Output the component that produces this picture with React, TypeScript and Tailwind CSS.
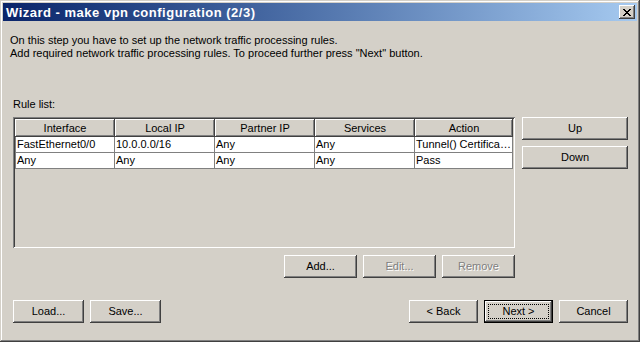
import React from "react";

const raised =
  "shadow-[inset_-1px_-1px_#404040,inset_1px_1px_#ffffff,inset_-2px_-2px_#808080,inset_2px_2px_#d4d0c8]";

type BtnProps = {
  label: string;
  className?: string;
  disabled?: boolean;
  isDefault?: boolean;
};

function Button({ label, className = "", disabled, isDefault }: BtnProps) {
  if (isDefault) {
    return (
      <div className={`h-[23px] border border-black bg-[#d4d0c8] ${className}`}>
        <div className={`flex h-full w-full items-center justify-center p-[3px] ${raised}`}>
          <div className="flex h-full w-full items-center justify-center border border-dotted border-black">
            {label}
          </div>
        </div>
      </div>
    );
  }
  return (
    <div
      className={`flex h-[23px] items-center justify-center bg-[#d4d0c8] ${raised} ${
        disabled ? "text-[#808080] [text-shadow:1px_1px_0_#ffffff]" : ""
      } ${className}`}
    >
      {label}
    </div>
  );
}

const columns = [
  { name: "Interface", w: "w-[100px]" },
  { name: "Local IP", w: "w-[100px]" },
  { name: "Partner IP", w: "w-[100px]" },
  { name: "Services", w: "w-[100px]" },
  { name: "Action", w: "w-[98px]" },
];

const rows = [
  ["FastEthernet0/0", "10.0.0.0/16", "Any", "Any", "Tunnel() Certifica\u2026"],
  ["Any", "Any", "Any", "Any", "Pass"],
];

export default function App() {
  return (
    <div
      className="flex h-[342px] w-[640px] flex-col bg-[#d4d0c8] p-[3px] text-[11px] leading-[13px] text-black shadow-[inset_-1px_-1px_#404040,inset_1px_1px_#d4d0c8,inset_-2px_-2px_#808080,inset_2px_2px_#ffffff]"
      style={{ fontFamily: '"Liberation Sans", Arial, sans-serif' }}
    >
      {/* title bar */}
      <div className="flex h-[18px] items-center justify-between bg-linear-to-r from-[#0a246a] to-[#a6caf0] pl-[3px] pr-[2px]">
        <span className="text-[13px] font-bold tracking-[0.5px] text-white">
          Wizard - make vpn configuration (2/3)
        </span>
        <div className={`flex h-[14px] w-[16px] items-center justify-center bg-[#d4d0c8] ${raised}`}>
          <svg width="8" height="7" viewBox="0 0 8 7" shapeRendering="crispEdges">
            <path
              d="M0 0h2v1h-2zM6 0h2v1h-2zM1 1h2v1h-2zM5 1h2v1h-2zM2 2h4v1h-4zM3 3h2v1h-2zM2 4h4v1h-4zM1 5h2v1h-2zM5 5h2v1h-2zM0 6h2v1h-2zM6 6h2v1h-2z"
              fill="#000"
            />
          </svg>
        </div>
      </div>

      {/* intro text */}
      <div className="mt-[13px] pl-[7px]">
        <p>On this step you have to set up the network traffic processing rules.</p>
        <p>Add required network traffic processing rules. To proceed further press "Next" button.</p>
      </div>

      <div className="mt-[38px] pl-[10px]">Rule list:</div>

      {/* list + side buttons */}
      <div className="mt-[6px] flex gap-[7px] pl-[10px]">
        <div className="h-[131px] w-[502px] bg-[#d4d0c8] p-[2px] shadow-[inset_1px_1px_#808080,inset_-1px_-1px_#ffffff,inset_2px_2px_#404040,inset_-2px_-2px_#d4d0c8]">
          <div className="flex h-[18px]">
            {columns.map((c) => (
              <div key={c.name} className={`flex items-center justify-center ${c.w} ${raised}`}>
                {c.name}
              </div>
            ))}
          </div>
          {rows.map((r, i) => (
            <div key={i} className="flex h-[16px] w-[498px] bg-white">
              {r.map((cell, j) => (
                <div
                  key={j}
                  className={`flex items-center overflow-hidden whitespace-nowrap border-r border-b border-[#808080] pl-[1px] ${
                    columns[j].w
                  } ${j === 0 ? "border-l" : ""}`}
                >
                  {cell}
                </div>
              ))}
            </div>
          ))}
        </div>
        <div className="flex flex-col gap-[6px]">
          <Button label="Up" className="w-[106px]" />
          <Button label="Down" className="w-[106px]" />
        </div>
      </div>

      {/* add / edit / remove */}
      <div className="mt-[7px] flex w-[512px] justify-end gap-[6px]">
        <Button label="Add..." className="w-[73px]" />
        <Button label="Edit..." className="w-[73px]" disabled />
        <Button label="Remove" className="w-[73px]" disabled />
      </div>

      {/* bottom bar */}
      <div className="mt-[22px] flex justify-between pl-[10px] pr-[9px]">
        <div className="flex gap-[6px]">
          <Button label="Load..." className="w-[71px]" />
          <Button label="Save..." className="w-[71px]" />
        </div>
        <div className="flex gap-[6px]">
          <Button label="< Back" className="w-[69px]" />
          <Button label="Next >" className="w-[69px]" isDefault />
          <Button label="Cancel" className="w-[69px]" />
        </div>
      </div>
    </div>
  );
}
